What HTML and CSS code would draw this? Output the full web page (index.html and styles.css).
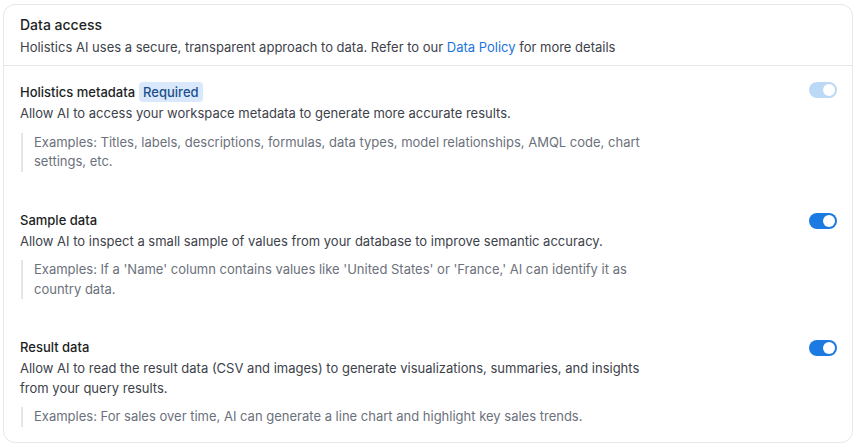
FILE: index.html
```html
<!DOCTYPE html>
<html lang="en">
<head>
<meta charset="utf-8">
<title>Data access</title>
<link rel="stylesheet" href="styles.css">
</head>
<body>
<section class="card">
  <header class="card-header">
    <h2 class="card-title">Data access</h2>
    <p class="card-subtitle">Holistics AI uses a secure, transparent approach to data. Refer to our <a href="#" class="link">Data Policy</a> for more details</p>
  </header>
  <div class="card-body">
    <div class="row">
      <div class="row-text">
        <div class="row-title">Holistics metadata <span class="badge">Required</span></div>
        <p class="row-desc">Allow AI to access your workspace metadata to generate more accurate results.</p>
        <blockquote class="examples">Examples: Titles, labels, descriptions, formulas, data types, model relationships, AMQL code, chart settings, etc.</blockquote>
      </div>
      <span class="toggle toggle-disabled"><span class="knob"></span></span>
    </div>
    <div class="row">
      <div class="row-text">
        <div class="row-title">Sample data</div>
        <p class="row-desc">Allow AI to inspect a small sample of values from your database to improve semantic accuracy.</p>
        <blockquote class="examples">Examples: If a 'Name' column contains values like 'United States' or 'France,' AI can identify it as country data.</blockquote>
      </div>
      <span class="toggle"><span class="knob"></span></span>
    </div>
    <div class="row">
      <div class="row-text">
        <div class="row-title">Result data</div>
        <p class="row-desc">Allow AI to read the result data (CSV and images) to generate visualizations, summaries, and insights from your query results.</p>
        <blockquote class="examples">Examples: For sales over time, AI can generate a line chart and highlight key sales trends.</blockquote>
      </div>
      <span class="toggle"><span class="knob"></span></span>
    </div>
  </div>
</section>
</body>
</html>
```
FILE: styles.css
```css
* { box-sizing: border-box; }
html, body { background: #ffffff; }
body {
  margin: 4px 5px 4px 3px;
  font-family: Inter, "Noto Sans", "Liberation Sans", sans-serif;
  font-size: 13px;
  color: #1f2328;
}
.card {
  border: 1px solid #e4e6ea;
  border-radius: 12px;
  background: #fff;
}
.card-header {
  padding: 10px 16px 8px;
  border-bottom: 1px solid #e4e6ea;
}
.card-title {
  margin: 0;
  font-size: 14px;
  line-height: 20px;
  font-weight: 500;
  color: #1c1f24;
}
.card-subtitle {
  margin: 2px 0 0;
  font-size: 13px;
  line-height: 20px;
  color: #3d424a;
}
.link { color: #1a73e0; text-decoration: none; }
.card-body {
  display: flex;
  flex-direction: column;
  gap: 6px;
}
.row {
  display: flex;
  justify-content: space-between;
  align-items: flex-start;
  padding: 16px 15px 16px 16px;
}
.row:last-child { padding-bottom: 15px; }
.row-text { width: 640px; }
.row-title {
  display: flex;
  align-items: center;
  gap: 4px;
  font-weight: 500;
  line-height: 20px;
  color: #1c1f24;
}
.badge {
  display: inline-flex;
  align-items: center;
  height: 20px;
  padding: 0 4px;
  border-radius: 4px;
  background: #d9e9fb;
  color: #1d4f8c;
  font-weight: 500;
}
.row-desc {
  margin: 2px 0 0;
  line-height: 19.5px;
  color: #3d424a;
}
.examples {
  margin: 9px 0 0 1px;
  padding: 0 0 0 11px;
  border-left: 2px solid #e3e5e9;
  line-height: 19.5px;
  color: #6b717c;
}
.toggle {
  position: relative;
  flex: none;
  width: 28px;
  height: 16px;
  margin-top: 3px;
  border-radius: 8px;
  background: #1b7be2;
}
.toggle-disabled { background: #bcd8f7; margin-top: 0; }
.knob {
  position: absolute;
  top: 2px;
  right: 2px;
  width: 12px;
  height: 12px;
  border-radius: 50%;
  background: #fff;
}
```
